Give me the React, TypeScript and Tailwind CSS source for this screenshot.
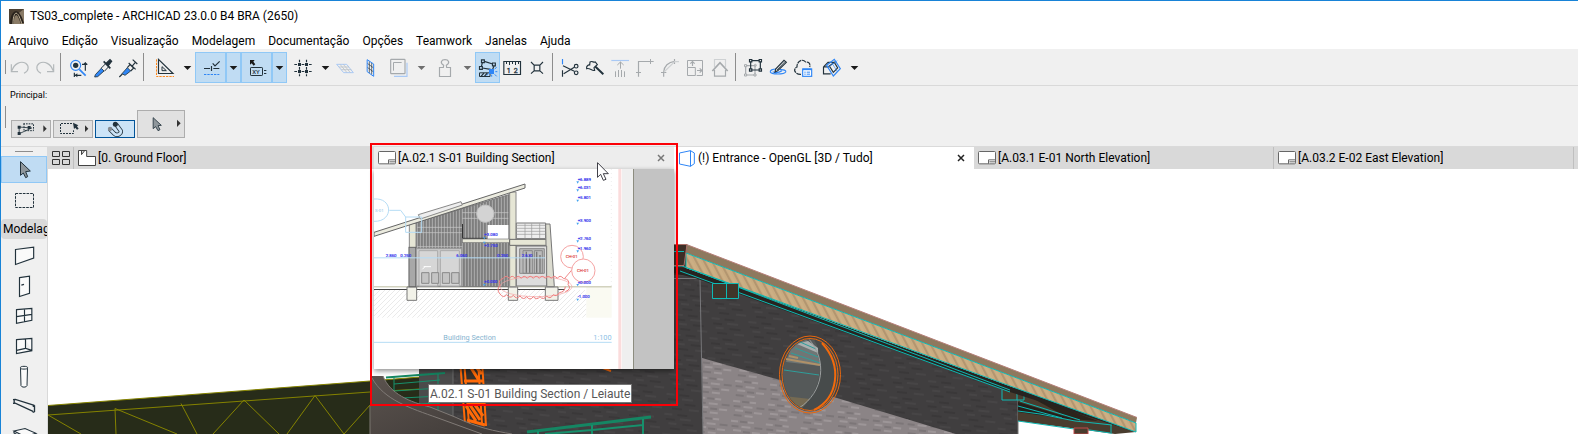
import type { ReactNode } from 'react';

type IconProps = { box: string; className?: string; children: ReactNode };

// All icons are drawn on a grid of three units per pixel
function Icon({ box, className = 'w-[25px] h-[31px]', children }: IconProps) {
  return (
    <svg
      viewBox={box}
      className={`${className} shrink-0`}
      fill="none"
      stroke="#22323c"
      strokeWidth="3.5"
      aria-hidden="true"
    >
      {children}
    </svg>
  );
}

const wide = 'w-[31px] h-[31px]';

function Tool({ label, active, children }: { label: string; active?: boolean; children: ReactNode }) {
  return (
    <button
      type="button"
      aria-label={label}
      className={`shrink-0 ${active ? 'bg-[#c0dcf3] outline outline-1 -outline-offset-1 outline-[#90c8f6]' : ''}`}
    >
      {children}
    </button>
  );
}

function Drop({ label, active, dim }: { label: string; active?: boolean; dim?: boolean }) {
  return (
    <Tool label={label} active={active}>
      <Icon box="0 0 45 93" className="w-[15px] h-[31px]">
        <path d="M11 42H34L22.500 54Z" fill={dim ? '#6e6e6e' : '#1a1a1a'} stroke="none" />
      </Icon>
    </Tool>
  );
}

function Separator() {
  return (
    <div className="w-2 shrink-0">
      <div className="ml-0.5 h-7 w-px bg-[#8d8d8d]" />
    </div>
  );
}

function Toolbar() {
  return (
    <div role="toolbar" aria-label="Padrão" className="flex items-center h-[37px] bg-[#f0f0f0] border-b border-[#d9d9d9]">
      <div className="w-[7px] shrink-0">
        <div className="ml-1 h-3.5 w-px bg-[#8d8d8d]" />
      </div>
      <Tool label="Desfazer">
        <Icon box="24 156 75 93">
          <path d="M34 193V215H54M36 212C42 192 62 181 77 190C88 198 87 213 72 220" stroke="#b3b8ba" />
        </Icon>
      </Tool>
      <Tool label="Refazer">
        <Icon box="99 156 75 93">
          <path d="M161 193V215H141M159 212C153 192 133 181 118 190C107 198 108 213 123 220" stroke="#b3b8ba" />
        </Icon>
      </Tool>
      <Separator />
      <Tool label="Localizar e selecionar">
        <Icon box="198 156 75 93">
          <circle cx="227" cy="196" r="15" stroke="#2f86f6" />
          <circle cx="227" cy="196" r="8" fill="#22323c" stroke="none" />
          <path d="M238 208L257 227" stroke="#2f86f6" strokeWidth="5" />
          <path d="M246 193H262M256 188V212M223 218V231M223 226H244" />
          <path d="M250 193L256 186L262 193ZM232 220L224 226L232 232Z" fill="#22323c" stroke="none" />
        </Icon>
      </Tool>
      <Tool label="Captar parâmetros">
        <Icon box="273 156 75 93">
          <path d="M286 224L304 205L312 213L293 230L284 231Z" fill="#2f86f6" stroke="#22323c" strokeWidth="2.500" />
          <path d="M303 205L318 190M313 214L327 199" strokeWidth="3" />
          <path d="M311 184L331 205" strokeWidth="5" />
          <path d="M318 190L330 179L335 184L325 197Z" fill="#22323c" />
        </Icon>
      </Tool>
      <Tool label="Injetar parâmetros">
        <Icon box="348 156 75 93">
          <path d="M366 221L382 203L392 213L375 226Z" fill="#2f86f6" stroke="#22323c" strokeWidth="2.500" />
          <path d="M358 231L367 222M382 203L390 194L401 204L392 213M386 189L407 208M396 199L406 187M398 179L412 192" />
        </Icon>
      </Tool>
      <Separator />
      <Tool label="Linhas guia">
        <Icon box="447 156 93 93" className={wide}>
          <path d="M475.500 178V220.500H519Z" />
          <path d="M486 200V212H499Z" strokeWidth="3" />
          <path d="M469.500 178V229.500H522" stroke="#ff8a1f" strokeDasharray="7 3" strokeWidth="3" />
        </Icon>
      </Tool>
      <Drop label="Opções de linhas guia" />
      <Tool label="Guias de atração" active>
        <Icon box="585 156 93 93" className={wide}>
          <path d="M612 205.500H630M634.500 198V213M640 205.500H658M638 190L645 198L659 184" />
          <path d="M612 223.500H658" stroke="#2f86f6" strokeDasharray="7 3" strokeWidth="3" />
        </Icon>
      </Tool>
      <Drop label="Opções de guias" active />
      <Tool label="Rastreador" active>
        <Icon box="723 156 93 93" className={wide}>
          <path d="M750 180H764L760 185L766 193L761 197L755 190L750 194Z" fill="#1a1a1a" stroke="none" />
          <rect x="751.500" y="202.500" width="36" height="24" rx="2" strokeWidth="3" />
          <text x="757" y="221" fontSize="18" fontWeight="500" fill="#22323c" stroke="none">XY</text>
          <path d="M792 211.500H799M792 220.500H799" strokeWidth="3" />
        </Icon>
      </Tool>
      <Drop label="Opções do rastreador" active />
      <Tool label="Grade">
        <Icon box="-9 156 93 93" className={wide}>
          <path d="M13 193.500H66M13 214.500H66M28.500 179V229M49.500 179V229" strokeDasharray="8 3" />
          <path d="M24 189H33V198H24ZM45 189H54V198H45ZM24 210H33V219H24ZM45 210H54V219H45Z" fill="#22323c" stroke="none" />
        </Icon>
      </Tool>
      <Drop label="Opções de grade" />
      <Tool label="Plano horizontal">
        <Icon box="129 156 75 93">
          <path d="M140 193H170L190 218H161Z" stroke="#a9c9f5" strokeWidth="3" />
          <path d="M150 193L171 218M160 193L181 218M147 201H177M154 209H184" stroke="#bcc3c9" strokeWidth="2.500" />
        </Icon>
      </Tool>
      <Tool label="Plano vertical">
        <Icon box="204 156 75 93">
          <path d="M238 184V219M245 189V224M232 190L251 204M232 202L251 216" strokeWidth="2" />
          <path d="M231.500 179L251 192V229L231.500 215Z" stroke="#2f86f6" strokeWidth="3" />
        </Icon>
      </Tool>
      <Tool label="Referência de traço">
        <Icon box="279 156 93 93" className={wide}>
          <path d="M351 188V229H312" stroke="#a9c9f5" />
          <rect x="302" y="178" width="43" height="43" rx="2" stroke="#a5a9ac" fill="#f0f0f0" />
          <path d="M310.500 212V187.500H335" stroke="#a5a9ac" strokeWidth="3" />
        </Icon>
      </Tool>
      <Drop label="Opções de traço" dim />
      <Tool label="Gravidade">
        <Icon box="417 156 93 93" className={wide}>
          <path d="M448.500 229.500V202.500H460L461 196C448 188 455 179 465 179C475 179 482 188 469 196L470 202.500H481.500V229.500Z" stroke="#a5a9ac" />
        </Icon>
      </Tool>
      <Drop label="Opções de gravidade" dim />
      <Tool label="Grupos suspensos" active>
        <Icon box="555 156 75 93">
          <path d="M583 184L608 192M574 201L577 188M577 204L602 208M612 198L608 208" />
          <path d="M574.500 179.500H583V188H574.500ZM607.500 189H616V197.500H607.500ZM568.500 199.500H577V208H568.500Z" fill="#c0dcf3" />
          <path d="M568.500 218.500H600V229.500H568.500Z" strokeWidth="3" />
          <path d="M573 229L582 219M583 229L592 219" />
          <rect x="597" y="207" width="15" height="15" fill="#2f86f6" stroke="none" />
          <path d="M614 207L620 202M616 215H622M614 223L620 229M605 224V230M595 222L590 226" stroke="#2f86f6" strokeWidth="3" />
        </Icon>
      </Tool>
      <Tool label="Medir">
        <Icon box="630 156 75 93">
          <path d="M641.500 184.500H691.500V223.500H641.500Z" />
          <path d="M649.500 185V192M658.500 185V195M667.500 185V192M676.500 185V195M685.500 185V192" strokeWidth="3" />
          <text x="650" y="218" fontSize="21" fill="#22323c" stroke="#22323c" strokeWidth="1">1</text>
          <text x="671" y="218" fontSize="21" fill="#22323c" stroke="#22323c" strokeWidth="1">2</text>
        </Icon>
      </Tool>
      <Tool label="Explodir">
        <Icon box="705 156 75 93">
          <path d="M732.500 195.500H749.500V212.500H732.500ZM723 186L733 196M759 186L749 196M723 221L733 212M759 221L749 212" />
        </Icon>
      </Tool>
      <Separator />
      <Tool label="Cortar">
        <Icon box="-6 66 75 93">
          <path d="M7.500 87V103" stroke="#2f86f6" />
          <path d="M7.500 121V140M9 107L43 124M11 131L43 112" />
          <circle cx="48.500" cy="108.500" r="5.500" />
          <circle cx="48.500" cy="128.500" r="5.500" />
        </Icon>
      </Tool>
      <Tool label="Ajustar">
        <Icon box="69 66 75 93">
          <path d="M80 116C78 108 85 104 89 105L90 96C96 91 101 99 106 96L112 104L102 113L104 121C96 124 90 113 80 116Z" />
          <path d="M105 109L130 133" strokeWidth="6" />
        </Icon>
      </Tool>
      <Tool label="Ajustar altura">
        <Icon box="144 66 75 93">
          <path d="M154 91.500H207" stroke="#a9c9f5" />
          <path d="M181.500 96V116M172 105L181.500 96L191 105M166.500 124V141M175.500 120V141M184.500 120V141M193.500 124V141" stroke="#a5a9ac" strokeWidth="3" />
        </Icon>
      </Tool>
      <Tool label="Interseção">
        <Icon box="219 66 75 93">
          <path d="M235.500 140V94.500H272M228 127.500H243" stroke="#a5a9ac" />
          <path d="M272 94.500H281M271.500 87V102" stroke="#a5a9ac" strokeWidth="3" />
        </Icon>
      </Tool>
      <Tool label="Filete">
        <Icon box="294 66 75 93">
          <path d="M311 140V126C312 109 325 96 344 94M303 127.500H319M343.500 87V102" stroke="#a5a9ac" />
          <path d="M312 126L344 95H357" stroke="#ced1d3" />
        </Icon>
      </Tool>
      <Tool label="Redimensionar">
        <Icon box="369 66 75 93">
          <path d="M382.500 112V91.500H427.500V136.500H410M382.500 112.500H406V136.500H382.500Z" stroke="#a5a9ac" strokeWidth="3" />
          <path d="M397.500 108V95M391 101L397.500 95L404 101M411 121.500H426M419 115L426 121.500L419 128" stroke="#a5a9ac" />
        </Icon>
      </Tool>
      <Tool label="Cobertura">
        <Icon box="444 66 75 93">
          <path d="M463.500 112V88.500H496.500V112" stroke="#ced1d3" />
          <path d="M463.500 120V138.500H496.500V120" stroke="#a5a9ac" />
          <path d="M457 123L480 98L503 123" stroke="#a5a9ac" strokeWidth="5" />
        </Icon>
      </Tool>
      <Separator />
      <Tool label="Agrupar">
        <Icon box="543 66 75 93">
          <path d="M557 107V135H585V107Z" stroke="#a5a9ac" />
          <path d="M553.500 104H560V110H553.500ZM553.500 132H560V138H553.500ZM582 132H588V138H582Z" fill="#f0f0f0" stroke="#a5a9ac" strokeWidth="3" />
          <path d="M572 92V120H601V92Z" />
          <path d="M568.500 88.500H575.500V95.500H568.500ZM597.500 88.500H604.500V95.500H597.500ZM568.500 116.500H575.500V123.500H568.500ZM597.500 116.500H604.500V123.500H597.500Z" fill="#f0f0f0" />
          <circle cx="586" cy="106" r="3" stroke="#a5a9ac" strokeWidth="3" />
        </Icon>
      </Tool>
      <Tool label="Anotar">
        <Icon box="618 66 75 93">
          <path d="M650 117C636 117 630 121 631 126C634 134 672 134 677 126C679 121 670 118 660 119M638 125C648 130 660 126 666 122" stroke="#2f86f6" />
          <path d="M645 126L647 117L672 91L679 97L653 122Z" fill="#f0f0f0" />
          <path d="M651 120L674 96" strokeWidth="2.500" />
        </Icon>
      </Tool>
      <Tool label="Teamwork">
        <Icon box="693 66 75 93">
          <path d="M723 133C704 134 698 116 711 111C710 94 727 84 737 96C748 95 752 103 749 111" strokeDasharray="14 2" />
          <rect x="728" y="117" width="27" height="22" stroke="#2f86f6" fill="#fff" />
          <path d="M728 118H755" stroke="#2f86f6" strokeWidth="5" />
          <path d="M733 126.500H737M740 126.500H750M733 132.500H737M740 132.500H750" stroke="#2f86f6" strokeWidth="3" />
        </Icon>
      </Tool>
      <Tool label="Modelo 3D">
        <Icon box="768 66 93 93" className={wide}>
          <path d="M790.500 110.500L804 97H826M790.500 110.500V131.500H812M790.500 110.500H808" />
          <path d="M800 106L823 88L841 116L820 138Z" stroke="#2f86f6" />
          <path d="M808 108L823 97L833 114L820 127Z" />
          <path d="M814 96L832 125M803 113L832 92" stroke="#2f86f6" strokeWidth="2" />
        </Icon>
      </Tool>
      <Drop label="Mais opções" />
    </div>
  );
}

function OptionsBar() {
  const gray = 'flex items-center justify-center border border-[#adadad] bg-[#e1e1e1]';
  return (
    <div className="h-[61px] bg-[#f0f0f0] border-b border-[#dadada]">
      <div className="h-[17px] pl-[9px] text-[9px] leading-[18px]">Principal:</div>
      <div className="flex items-end h-[35px] pl-1">
        <div className="mr-[5px] mb-2.5 h-[22px] w-px bg-[#8d8d8d]" />
        <button type="button" aria-label="Método de geometria" className={`${gray} w-10 h-[18px] mr-0.5`}>
          <Icon box="36 108 114 48" className="w-[38px] h-4">
            <path d="M57.500 145V126L95 129L60 145" strokeWidth="2.500" />
            <path d="M70 116.500H100.500V137H72V116" strokeDasharray="5 3" strokeWidth="3" />
            <path d="M53 122H62V131H53ZM53 141H62V150H53ZM83 123H92V132H83Z" fill="#22323c" stroke="none" />
            <path d="M130 121L140 131L130 141Z" fill="#333" stroke="none" />
          </Icon>
        </button>
        <button type="button" aria-label="Método de seleção" className={`${gray} w-10 h-[18px] mr-0.5`}>
          <Icon box="162 108 114 48" className="w-[38px] h-4">
            <path d="M216 115.500H181.500V145.500H220.500V136" strokeDasharray="6 3" strokeWidth="3" />
            <path d="M219 113L235 121L231 124L236 131L231 134L226 128L222 132Z" fill="#22323c" stroke="none" />
            <path d="M255 121L265 131L255 141Z" fill="#333" stroke="none" />
          </Icon>
        </button>
        <button
          type="button"
          aria-label="Seleção rápida"
          aria-pressed="true"
          className="flex items-center justify-center w-10 h-[18px] mr-0.5 border border-[#005499] bg-[#cce4f7]"
        >
          <Icon box="288 108 114 48" className="w-[38px] h-4">
            <path d="M329 132L343 146C352 154 365 146 362 137L348 118" stroke="#22323c" strokeWidth="13" />
            <path d="M329 132L343 146C352 154 365 146 362 137L348 118" stroke="#cce4f7" strokeWidth="8" />
            <circle cx="346" cy="118" r="7.500" fill="#22323c" stroke="none" />
            <circle cx="330" cy="132" r="6.500" fill="#868b90" stroke="none" />
          </Icon>
        </button>
        <button type="button" aria-label="Seta" className={`${gray} w-12 h-7`}>
          <Icon box="414 78 138 78" className="w-[46px] h-[26px]">
            <path d="M459.500 98V131L467 125L474 137L480 134L474 122L484 121Z" fill="#8f979c" strokeWidth="2.500" />
            <path d="M531 104L542 115L531 126Z" fill="#333" stroke="none" />
          </Icon>
        </button>
      </div>
    </div>
  );
}

const modelTools = [
  { label: 'Parede', box: '3 0 138 90', shape: <path d="M46.500 28.500L101 21.500V54L46.500 73.500Z" fill="#fafafa" /> },
  {
    label: 'Porta',
    box: '3 90 138 90',
    shape: (
      <>
        <path d="M58.500 113L88.500 108.500V160L58.500 169.500Z" fill="#fafafa" />
        <path d="M64 135.500L72 133" />
      </>
    ),
  },
  { label: 'Janela', box: '3 180 138 90', shape: <path d="M49.500 209L95.500 205.500V241L49.500 250ZM73.500 207V246M49.500 230L95.500 223" fill="#fafafa" /> },
  {
    label: 'Janela de canto',
    box: '3 270 138 90',
    shape: <path d="M49.500 299L95.500 295.500V332L49.500 340.500ZM76.500 297V325L95.500 331M76.500 325L50 331" fill="#fafafa" />,
  },
  {
    label: 'Pilar',
    box: '3 360 138 90',
    shape: <path d="M61.500 382V385C61.500 388 82.500 388 82.500 385V382C82.500 378 61.500 378 61.500 382M61.500 385L63 437C64 443 80 443 81 437L82.500 385" fill="#fafafa" strokeWidth="3" />,
  },
  {
    label: 'Viga',
    box: '3 450 138 90',
    shape: <path d="M39 479L46 478L103 496M42.500 480V492M39 490L44 489L99 514M103.500 496V516M98 499L104 496M98 517L104 515" strokeWidth="4" />,
  },
  { label: 'Laje', box: '3 540 138 90', shape: <path d="M42 573L75 565.500L108 580L75 590ZM42 573V579L75 596" fill="#fafafa" /> },
];

function Toolbox() {
  return (
    <nav aria-label="Ferramentas" className="flex flex-col shrink-0 w-[47px] bg-[#f0f0f0] border-r border-[#d9d9d9]">
      <div className="shrink-0 mt-1 ml-3.5 mb-1 h-px w-[18px] bg-[#8d8d8d]" />
      <Tool label="Seta" active>
        <Icon box="3 213 138 81" className="block w-[46px] h-[27px]">
          <path d="M61.500 230V271L70 264L77 278L83 275L77 260L91 258Z" fill="#8f979c" strokeWidth="3" />
        </Icon>
      </Tool>
      <Tool label="Área de seleção">
        <Icon box="3 294 138 108" className="block w-[46px] h-9">
          <rect x="46.500" y="325.500" width="54" height="42" strokeDasharray="8 3" strokeWidth="3" />
        </Icon>
      </Tool>
      <h2 className="shrink-0 h-5 mb-px w-[46px] rounded-sm bg-[#d9d9d9] overflow-hidden whitespace-nowrap pl-0.5 leading-5">
        Modelagem
      </h2>
      {modelTools.map((tool) => (
        <Tool key={tool.label} label={tool.label}>
          <Icon box={tool.box} className="block w-[46px] h-[30px]">
            {tool.shape}
          </Icon>
        </Tool>
      ))}
    </nav>
  );
}

function LayoutIcon() {
  return (
    <svg viewBox="0 0 54 42" className="w-[18px] h-3.5 shrink-0" fill="#fff" stroke="#666" strokeWidth="3" aria-hidden="true">
      <rect x="1.500" y="1.500" width="51" height="37" rx="3" />
      <path d="M31.500 38.500V26.500H52M34 32.500H52" />
    </svg>
  );
}

function PlanIcon() {
  return (
    <svg viewBox="0 0 54 48" className="w-[18px] h-4 shrink-0" fill="#fff" stroke="#444" strokeWidth="3" aria-hidden="true">
      <path d="M1.500 1.500H26L26 19.500H52.500V46.500H1.500ZM10.500 2V14L20 2" />
    </svg>
  );
}

function ModelIcon() {
  return (
    <svg viewBox="-3 0 54 51" className="w-[18px] h-[17px] shrink-0" fill="none" stroke="#2f86f6" strokeWidth="3" aria-hidden="true">
      <path d="M1.500 9L34.500 2V49L1.500 42ZM34.500 2L46 9V41L34.500 49" />
    </svg>
  );
}

const tabs = [
  { title: '[0. Ground Floor]', icon: <PlanIcon />, look: 'bg-[#d9d9d9]' },
  { title: '[A.02.1 S-01 Building Section]', icon: <LayoutIcon />, look: 'bg-[#ededed]', close: 'text-[#777]', preview: true },
  { title: '(!) Entrance - OpenGL [3D / Tudo]', icon: <ModelIcon />, look: 'bg-white', close: 'text-[#222]' },
  { title: '[A.03.1 E-01 North Elevation]', icon: <LayoutIcon />, look: 'bg-[#d9d9d9] border-r border-[#bfbfbf]' },
  { title: '[A.03.2 E-02 East Elevation]', icon: <LayoutIcon />, look: 'bg-[#d9d9d9] border-r border-[#bfbfbf]' },
];

function TabBar() {
  return (
    <div className="flex h-[22px] bg-[#d9d9d9]">
      <button type="button" aria-label="Visão geral das abas" className="w-[26px] shrink-0 flex items-center justify-center border-r border-[#bfbfbf]">
        <svg viewBox="0 0 54 45" className="w-[18px] h-[15px]" fill="none" stroke="#333" strokeWidth="3" aria-hidden="true">
          <path d="M1.500 1.500H22.500V16.500H1.500ZM31.500 1.500H52.500V16.500H31.500ZM1.500 25.500H22.500V40.500H1.500ZM31.500 25.500H52.500V40.500H31.500Z" />
        </svg>
      </button>
      {tabs.map((tab) => (
        <div key={tab.title} className={`relative flex items-center flex-1 min-w-0 max-w-[300px] pl-1 pr-[7px] ${tab.look}`}>
          <button type="button" className="flex items-center flex-1 min-w-0 gap-0.5 text-left whitespace-nowrap">
            {tab.icon}
            <span className="truncate">{tab.title}</span>
          </button>
          {tab.close && (
            <button type="button" aria-label={`Fechar ${tab.title}`} className={`size-3 flex items-center justify-center ${tab.close}`}>
              <svg viewBox="0 0 8 8" className="size-2" stroke="currentColor" strokeWidth="1.500" aria-hidden="true">
                <path d="M1 1L7 7M7 1L1 7" />
              </svg>
            </button>
          )}
          {tab.preview && <TabPreview />}
        </div>
      ))}
    </div>
  );
}

const levels = [
  { y: 123, label: '+6.889' },
  { y: 147, label: '+6.031' },
  { y: 178, label: '+5.801' },
  { y: 247, label: '+3.900' },
  { y: 300, label: '+2.760' },
  { y: 330, label: '+1.960' },
  { y: 431, label: '±0.000' },
  { y: 475, label: '-1.000' },
];

const widths = [
  { x: 62, label: '2.860' },
  { x: 106, label: '0.250' },
  { x: 274, label: '6.060' },
  { x: 397, label: '0.250' },
  { x: 470, label: '2.670' },
];

function SectionDrawing() {
  return (
    <svg viewBox="27 87 900 600" className="block w-full h-auto bg-white" fill="none" stroke="#555" strokeWidth="3" role="img" aria-label="Building Section">
      <defs>
        <pattern id="siding" width="9" height="600" patternUnits="userSpaceOnUse">
          <rect width="9" height="600" fill="#a6a6a6" />
          <path d="M1.500 0V600" stroke="#858585" strokeWidth="3" />
        </pattern>
        <pattern id="ground" width="15" height="15" patternUnits="userSpaceOnUse">
          <path d="M0 15L15 0" stroke="#d4d4d4" strokeWidth="1.500" />
        </pattern>
      </defs>
      <rect x="760" y="87" width="9" height="600" fill="#fbdcdc" stroke="none" />
      <rect x="771" y="87" width="33" height="600" fill="#efefef" stroke="none" />
      <rect x="807" y="87" width="120" height="600" fill="#c3c3c3" stroke="none" />
      <path d="M805.500 87V687" stroke="#8d8d80" />
      <path d="M739 87V440" stroke="#eee" strokeDasharray="3 9" />

      {/* ground and foundations */}
      <rect x="27" y="450" width="637" height="83" fill="url(#ground)" stroke="none" />
      <rect x="664" y="440" width="76" height="93" fill="#fafaf2" stroke="none" />
      <path d="M27 440.500H740" stroke="#bcbca0" />
      <path d="M27 448.500H600" stroke="#444" />
      <g fill="#f2f2e9" stroke="#777">
        <path d="M126 441H155V481H126ZM430 441H458V481H430ZM541 441H579V481H541Z" />
      </g>

      {/* walls */}
      <path d="M154 247L432 164V440H154Z" fill="url(#siding)" stroke="#777" />
      <path d="M156 262H292M156 278H292M292 235H430M292 218H430M156 320H292" stroke="#ccc" strokeWidth="2" />
      <rect x="368" y="255" width="62" height="53" fill="#fff" stroke="none" />
      <path d="M292.500 252V295H365" stroke="#333" />
      <rect x="292" y="297" width="142" height="11" fill="#e9e9da" stroke="#777" strokeWidth="2" />
      <circle cx="361" cy="221" r="26" fill="#d3d3d3" stroke="#c2c2c2" />
      <path d="M133 250H153V440H133Z M434 156H453V440H434Z" fill="#e6e6d5" stroke="#888" />
      <rect x="132" y="322" width="20" height="118" fill="#a8a8a8" stroke="#666" />
      <path d="M27 277L480 132V144L27 289Z" fill="#ebebdf" stroke="#666" />
      <path d="M160 224L288 185L292 195L166 237Z" fill="#eee" stroke="#888" />

      {/* glazing and chairs */}
      <path d="M154 326H290V438H154Z" fill="#ccc" stroke="#999" />
      <path d="M162 332H218V438H162ZM226 332H283V438H226Z" fill="#d6d6d6" stroke="#aaa" />
      <path d="M170 398H192V430H170ZM200 398H221V430H200ZM232 398H254V430H232ZM260 398H282V430H260Z" stroke="#888" fill="#c4c4c4" />
      <path d="M176 380H198M172 388L182 378" stroke="#fff" />

      {/* balcony block */}
      <path d="M454 249H542V296H454Z" fill="#eee" stroke="#777" />
      <path d="M454 256H542M454 265H542M454 274H542M454 283H542M480 250V296M500 250V296M524 250V296" stroke="#999" strokeWidth="2" />
      <path d="M434 298H550V316H434Z" fill="#e6e6d5" stroke="#666" />
      <path d="M542 252H555L568 440H545Z" fill="#dcdcd0" stroke="#777" />
      <path d="M454 318H545V438H454Z" fill="#ddd" stroke="#777" />
      <path d="M464 326H538V400H464ZM474 332H502V400H474ZM508 332H532V400H508Z" fill="#bbb" stroke="#888" />
      <path d="M484 335V398M494 345V398M515 335V398M525 345V398" stroke="#777" strokeWidth="4" />

      {/* revision clouds */}
      <ellipse cx="513" cy="440" rx="108" ry="30" stroke="#f5a3a3" strokeWidth="2" />
      <path d="M415 415q8-12 18 0q8-12 18 0q8-12 18 0q8-12 18 0q8-12 18 0q8-12 18 0q8-12 18 0q8-12 18 0q8-12 18 0q8-12 18 0q22 4 14 18q12 14-8 22M415 415q-18 6-10 20q-12 14 0 27q10 14 20 2q10 14 20 2q10 14 20 2q10 14 20 2q10 14 20 0q10 12 20 0q10 12 20-2q10 12 20-4q10 8 18-6q16-2 18-18" stroke="#f08080" />
      <path d="M600 414L622 388" stroke="#f08c8c" />
      <circle cx="621" cy="350" r="34" fill="#fff" stroke="#f5a3a3" />
      <circle cx="655" cy="392" r="35" fill="#fff" stroke="#f5a3a3" />
      <g fill="#e25555" stroke="#e25555" strokeWidth="0.500" fontSize="13">
        <text x="602" y="355">CH-01</text>
        <text x="636" y="397">CH-01</text>
      </g>

      {/* dimensions */}
      <g stroke="#b5dcf5">
        <path d="M27 353.500H540M27 607H740M73 211H107L122 231" />
        <path d="M122 231H170V277H122Z" />
        <path d="M27 177C85 172 86 246 27 244" />
      </g>
      <g fill="#3434ee" stroke="#3434ee" strokeWidth="0.500" fontSize="13">
        {levels.map((level) => (
          <text key={level.label} x="638" y={level.y}>{level.label}</text>
        ))}
        {widths.map((width) => (
          <text key={width.x} x={width.x} y="352">{width.label}</text>
        ))}
        <text x="358" y="289">+3.080</text>
        <text x="358" y="321">+2.750</text>
        <text x="358" y="430">±0.000</text>
      </g>
      <g fill="#45a5f0" stroke="none">
        {levels.map((level) => (
          <path key={level.label} d={`M634 ${level.y + 1}h8l-4 7z`} />
        ))}
        <path d="M354 292H362L358 298ZM354 305H362L358 311ZM354 432H362L358 438Z" />
      </g>
      <g fill="#8dbfe6" stroke="none">
        <text x="30" y="215" fontSize="13">S-01</text>
        <text x="235" y="600" fontSize="22" fill="#86b4cf">Building Section</text>
        <text x="685" y="600" fontSize="22">1:100</text>
      </g>
    </svg>
  );
}

function TabPreview() {
  return (
    <>
      <div className="absolute z-10 left-0 top-[22px] w-full shadow-[0_2px_5px_rgba(0,0,0,0.45)]">
        <SectionDrawing />
      </div>
      <div className="absolute z-20 -left-1 -top-1 -right-1 h-[263px] border-2 border-[#fb0007] pointer-events-none" />
      <div role="tooltip" className="absolute z-20 left-[54px] top-[237px] h-[19px] px-px border border-[#767676] bg-white whitespace-nowrap leading-[18px] text-[#575757]">
        A.02.1 S-01 Building Section / Leiaute
      </div>
      <svg viewBox="0 0 36 60" className="absolute z-30 left-[223px] top-[15px] w-3 h-5" fill="#fff" stroke="#1b1b24" strokeWidth="2.500" aria-hidden="true">
        <path d="M1.500 2V46L11 37L19 55L27 52L19 35H34Z" />
      </svg>
    </>
  );
}

function ModelView() {
  return (
    <svg viewBox="48 169 1530 265" className="block w-full h-auto" fill="none" role="img" aria-label="Entrance - OpenGL">
      <defs>
        <pattern id="darkBrick" width="37" height="20" patternUnits="userSpaceOnUse" patternTransform="rotate(6)">
          <rect width="37" height="20" fill="#403e3f" />
          <path d="M1 1H9V3H1ZM17 5H28V7H17ZM6 10H14V12H6ZM25 15H35V17H25Z" fill="#474546" />
          <path d="M14 1H24V3H14ZM3 6H12V8H3ZM20 10H31V12H20ZM8 15H18V17H8Z" fill="#3a3839" />
        </pattern>
        <pattern id="lightBrick" width="35" height="20" patternUnits="userSpaceOnUse" patternTransform="rotate(6)">
          <rect width="35" height="20" fill="#8b8486" />
          <path d="M1 1H8V3H1ZM18 1H24V3H18ZM12 6H21V8H12ZM4 10H12V12H4ZM23 11H31V13H23ZM14 15H22V17H14Z" fill="#9d9698" />
          <path d="M10 1H17V3H10ZM2 6H9V8H2ZM25 6H33V8H25ZM14 11H21V13H14ZM3 15H11V17H3Z" fill="#7c7678" />
        </pattern>
        <pattern id="wood" width="7" height="60" patternUnits="userSpaceOnUse" patternTransform="rotate(-28)">
          <rect width="7" height="60" fill="#c9ab80" />
          <path d="M2 0V60" stroke="#b39670" strokeWidth="2" />
          <path d="M5 0V60" stroke="#d0b489" strokeWidth="1" />
        </pattern>
        <linearGradient id="curved" x1="0" y1="0" x2="1" y2="1">
          <stop offset="0" stopColor="#5b534e" />
          <stop offset="1" stopColor="#3f3a38" />
        </linearGradient>
        <clipPath id="porthole">
          <ellipse cx="810" cy="374.500" rx="27" ry="35" />
        </clipPath>
      </defs>

      {/* terrain */}
      <path d="M48 405.500L370 381L420 377V434H48Z" fill="#272c19" />
      <path
        d="M48 405.500L370 381L420 377M48 415L370 392L420 389M48 415L81 434M115 408.500L116 434M115 408.500L177 434M181 403.500L197 434M244 400L213 434M244 400L279 434M315 395.500L287 434M315 395.500L344 434L370 405"
        stroke="#858300"
      />

      {/* main walls */}
      <path d="M419 300H700V434H419Z" fill="url(#darkBrick)" />
      <path d="M419 300H453V434H419Z" fill="#4b4b4b" />
      <path d="M453 300V434" stroke="#6a6a6a" />
      <path d="M674 266L700 272L1005 388L1018 394V434H703L674 434Z" fill="url(#darkBrick)" />
      <path d="M702 358L780 380L837 398L956 434H703Z" fill="url(#lightBrick)" />
      <path d="M674 278.500H700L703 434" stroke="#77777a" />
      <path d="M1018 396V434" stroke="#777" />

      {/* eaves on the right */}
      <path d="M1002 388H1024L1136 432L1115 434L1018 421V400H1002Z" fill="#493c2e" />
      <path d="M1018 402L1080 421L1018 412Z" fill="#241f1a" />
      <path d="M1025 394L1098 421L1070 419Z" fill="#2b231b" />
      <path d="M1002 389.500V400H1024V392M1017 391V400M1020 401L1080 420M1018 406L1062 418M1018 411L1040 414M1018 421L1074 429M1083 429L1110 433M1111 425V434M1040 414L1075 421L1112 425" stroke="#0fb9b4" />
      <path d="M1074 428H1088V434H1074Z" fill="#493c2e" stroke="#c34848" />

      {/* roof */}
      <path d="M674 245H687V275H674Z" fill="#3d2e26" />
      <path d="M674 267L686 268L1136 432L1010 392L695 278L674 273Z" fill="#272320" />
      <path d="M686.500 244.500L1137 417.500L1136 423L686 253Z" fill="#8e795e" />
      <path d="M686.500 244.500L1137 417.500" stroke="#b67f78" />
      <path d="M686 253L1136 423V432L686 268Z" fill="url(#wood)" />
      <path d="M686 253L1136 423V432L686 267.500V253M674 251.500H684M674 266H682L1010 390M680 271L1010 392" stroke="#0fb9b4" />
      <path d="M674 244.500H687L684 265.500H674" stroke="#a97068" />
      <path d="M712.500 283.500H738.500V298.500H712.500Z" fill="#40352a" stroke="#0fb9b4" />
      <path d="M726.500 283V298" stroke="#0fb9b4" />

      {/* round window */}
      <ellipse cx="810" cy="374.500" rx="29" ry="37" fill="#474b4b" />
      <g clipPath="url(#porthole)">
        <path d="M780 330H808C828 355 824 390 796 414L780 414Z" fill="#555959" />
        <path d="M790 350L800 336L814 345L821 366L786 362Z" fill="#707675" />
        <path d="M797 344L818 353V348L808 341Z" fill="#a9b0b0" />
        <path d="M786 359L820 365M789 356L798 358" stroke="#b09168" strokeWidth="2" />
        <path d="M784 396L810 399L798 412H788Z" fill="#756a52" />
        <path d="M795 348L818 357M791 353L820 363M784 370L819 375M800 342L816 349" stroke="#2f9e9a" />
        <path d="M808 338C828 360 824 392 799 408" stroke="#9a9e9e" />
      </g>
      <ellipse cx="810" cy="374.500" rx="30.500" ry="38.500" stroke="#e8680f" />
      <ellipse cx="810" cy="374.500" rx="28" ry="36" stroke="#e8680f" />
      <path d="M822 343C843 366 838 398 814 410" stroke="#f26a0c" strokeWidth="2" />

      {/* orange shutters behind the stair */}
      <path d="M460 300H484V425H464Z" fill="#35302a" />
      <path d="M460 360L465 424M464 360L469 424M482 360L486 426M478 360L482 424" stroke="#ff6a08" strokeWidth="2" />
      <path d="M466 360L480 382M470 360L482 374M466 406L476 421M470 405L480 420M475 405L483 416M464 381H484M467 404H484M467 420L485 425" stroke="#ff6a08" strokeWidth="3" />
      <path d="M600 367L611 371" stroke="#ff6a08" strokeWidth="2" />

      {/* railings and curved wall */}
      <path d="M386 377.500L445 373" stroke="#138762" strokeWidth="2" />
      <path d="M394 377V394M438 374V412M394 384L440 380M394 391L440 388M402 398L440 396M418 404L440 403" stroke="#17906c" />
      <path d="M371 376H383C390 394 410 402 430 407L455 417C478 428 495 431 512 434H370Z" fill="url(#curved)" />
      <path d="M383 376C390 394 410 402 430 407L455 417C478 428 495 431 512 434M372 378C384 400 410 408 438 418L482 434M370 406V434" stroke="#807a76" />
      <path d="M527 432L651 417" stroke="#158663" strokeWidth="3" />
      <path d="M538 431V434M592 425V434M643 419V434M545 434L592 430L643 425" stroke="#17906c" strokeWidth="2" />
    </svg>
  );
}

const menus = ['Arquivo', 'Edição', 'Visualização', 'Modelagem', 'Documentação', 'Opções', 'Teamwork', 'Janelas', 'Ajuda'];

export default function App() {
  return (
    <div className="flex flex-col h-screen overflow-hidden border-t border-l border-[#1883d7] bg-white text-[12px] leading-4 text-black font-['Roboto','Noto_Sans',sans-serif]">
      <header>
        <div className="flex items-center h-[30px] pl-2 gap-1.5">
          <svg viewBox="0 0 15 15" className="size-[15px] shrink-0" aria-hidden="true">
            <rect width="15" height="15" fill="#8a7b66" />
            <path d="M0 0H15L6 7L0 15Z" fill="#4c4033" />
            <path d="M1 15C1 8 3 3 7 2C11 3 13 8 15 14L12 15C10 10 9 6 7 6C5 7 5 11 5 15Z" fill="#29221c" />
            <path d="M4 15C4 9 5 5 7 4C10 5 11 10 13 15" fill="none" stroke="#c2b49a" strokeWidth="1" />
          </svg>
          <h1>TS03_complete - ARCHICAD 23.0.0 B4 BRA (2650)</h1>
        </div>
        <nav aria-label="Menu" className="flex items-end h-[18px] pl-[7px] gap-[13px]">
          {menus.map((menu) => (
            <button key={menu} type="button">
              {menu}
            </button>
          ))}
        </nav>
      </header>
      <Toolbar />
      <OptionsBar />
      <div className="flex flex-1 min-h-0">
        <Toolbox />
        <main className="flex-1 min-w-0">
          <TabBar />
          <ModelView />
        </main>
      </div>
    </div>
  );
}
